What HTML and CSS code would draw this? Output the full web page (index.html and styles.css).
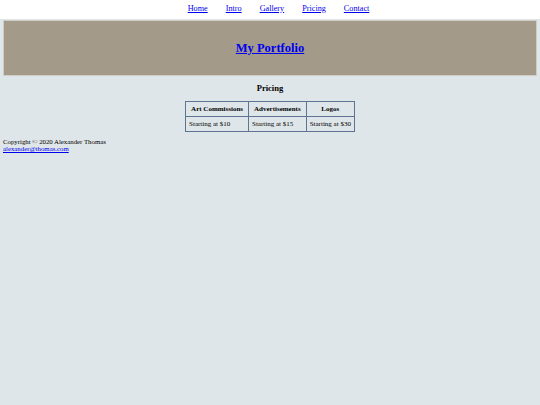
FILE: index.html
```html
<!DOCTYPE html>
<html>
<head>
<meta charset="utf-8">
<link rel="stylesheet" href="styles.css">
</head>
<body>
<nav class="nav">
  <a href="#">Home</a>
  <a href="#">Intro</a>
  <a href="#">Gallery</a>
  <a href="#">Pricing</a>
  <a href="#">Contact</a>
</nav>
<main class="main">
  <header class="banner">
    <h1 class="title"><a href="#">My Portfolio</a></h1>
  </header>
  <section class="pricing">
    <h2 class="pricing-title">Pricing</h2>
    <table class="table">
      <tr><th>Art Commissions</th><th>Advertisements</th><th>Logos</th></tr>
      <tr><td>Starting at $10</td><td>Starting at $15</td><td>Starting at $30</td></tr>
    </table>
  </section>
  <footer class="footer">
    <div>Copyright © 2020 Alexander Thomas</div>
    <a href="#">alexander@thomas.com</a>
  </footer>
</main>
</body>
</html>
```
FILE: styles.css
```css
html, body {
  margin: 0;
  padding: 0;
  height: 100%;
}
body {
  font-family: "Liberation Serif", "Times New Roman", serif;
  font-size: 7.5px;
  background: #dfe6e9;
  display: flex;
  flex-direction: column;
}
a { color: #0000ee; }
.nav {
  background: #ffffff;
  height: 16px;
  padding: 0 0 3px 17px;
  display: flex;
  justify-content: center;
  align-items: center;
  gap: 18px;
  font-size: 8.2px;
}
.main {
  padding: 1px 3px;
}
.banner {
  background: #a39a8a;
  border: 1px solid #cfcdc6;
  height: 54px;
  display: flex;
  align-items: center;
  justify-content: center;
}
.title {
  margin: 0;
  font-size: 12.5px;
  font-weight: bold;
}
.pricing {
  display: flex;
  flex-direction: column;
  align-items: center;
}
.pricing-title {
  font-size: 8.5px;
  margin: 7px 0 8px;
}
.table {
  border-collapse: collapse;
  font-size: 7px;
}
.table th, .table td {
  border: 1px solid #5d7592;
  padding: 3px 5px;
  text-align: center;
}
.table td { text-align: left; padding: 3px 3px; }
.footer {
  margin-top: 6px;
  font-size: 6.8px;
  line-height: 7px;
}
```
